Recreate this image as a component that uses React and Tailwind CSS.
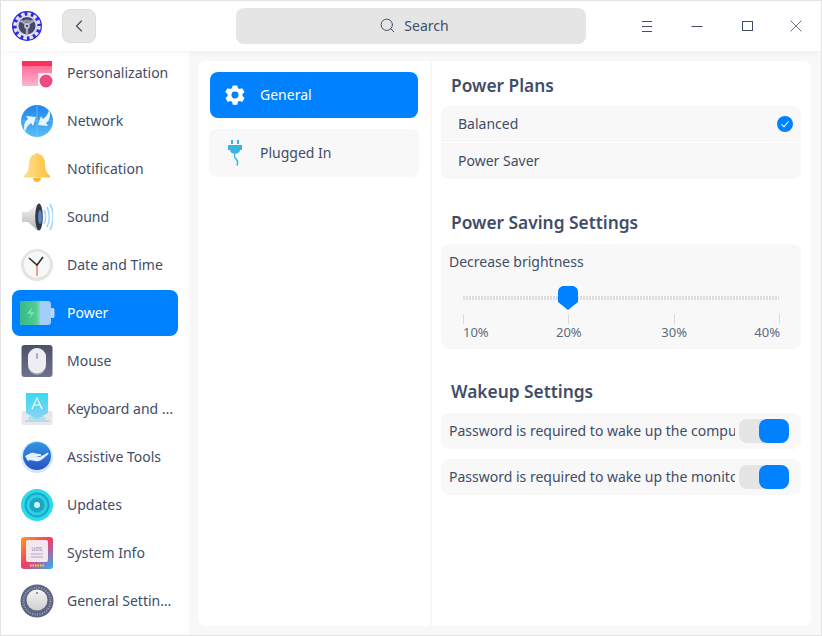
import React from 'react';
import { Search, ChevronLeft } from 'lucide-react';

const LogoIcon = () => (
  <svg width="32" height="32" viewBox="0 0 32 32">
    <circle cx="16" cy="16" r="15" fill="#2a2ae6" />
    <circle cx="16" cy="16" r="12" fill="none" stroke="#e4e4f0" strokeWidth="3.500" strokeDasharray="3.600 2.680" />
    <circle cx="16" cy="16" r="10.500" fill="#dcdce8" />
    <circle cx="16" cy="16" r="8.500" fill="#44496c" />
    <path d="M16 16 L9 10.500 A9 9 0 0 1 23 10.500 Z" fill="#3e4366" />
    <path d="M16 14.500L9.500 10.500M16 14.500l6.500-4M16 16v8" stroke="#a9abbd" strokeWidth="2.400" fill="none" />
    <ellipse cx="16" cy="11" rx="4" ry="1.600" fill="#8d90a8" />
    <circle cx="16" cy="16" r="2.800" fill="#d4d4e0" />
    <circle cx="16" cy="16" r="1.300" fill="#44496c" />
  </svg>
);

const PersonalizationIcon = () => (
  <svg width="32" height="32" viewBox="0 0 32 32">
    <defs>
      <linearGradient id="pers" x1="0" y1="0" x2="0" y2="1">
        <stop offset="0" stopColor="#ff5f8c" />
        <stop offset="1" stopColor="#ffb3d0" />
      </linearGradient>
    </defs>
    <path d="M1 4h30v24a1 1 0 0 1-1 1H2a1 1 0 0 1-1-1z" fill="url(#pers)" />
    <rect x="1" y="4" width="30" height="5" fill="#ff3058" />
    <rect x="17" y="16" width="14" height="13" fill="#f7dbe6" />
    <circle cx="25" cy="24" r="8" fill="#fff" />
    <circle cx="25" cy="24" r="6.500" fill="#ec4a80" />
  </svg>
);

const NetworkIcon = () => (
  <svg width="32" height="32" viewBox="0 0 32 32">
    <defs>
      <linearGradient id="net" x1="0" y1="0" x2="0" y2="1">
        <stop offset="0" stopColor="#1c86ec" />
        <stop offset="1" stopColor="#58bdfa" />
      </linearGradient>
    </defs>
    <circle cx="16" cy="16" r="16" fill="url(#net)" />
    <path d="M16 0v32M0 16h32" stroke="#7cc5f7" strokeWidth="0.700" fill="none" />
    <path d="M4 27c-2-5-1-10 3-13l-2-3 10 1-3 9-2-3c-3 2-5 5-6 9z" fill="#e8f5fe" />
    <path d="M28 5c2 5 1 10-3 13l2 3-10-1 3-9 2 3c3-2 5-5 6-9z" fill="#e8f5fe" />
  </svg>
);

const BellIcon = () => (
  <svg width="32" height="32" viewBox="0 0 32 32">
    <defs>
      <linearGradient id="bell" x1="0" y1="0" x2="1" y2="0">
        <stop offset="0" stopColor="#ffe08f" />
        <stop offset="1" stopColor="#ffbe3c" />
      </linearGradient>
    </defs>
    <circle cx="16" cy="2.500" r="2.200" fill="#f9c95c" />
    <path d="M16 1c6 0 8 5 8 10 0 6 2 9 5 12 .6.800 0 1.500-1 1.500H4c-1 0-1.600-.700-1-1.500 3-3 5-6 5-12C8 6 10 1 16 1z" fill="url(#bell)" />
    <path d="M12 25h8c0 2.500-1.800 4-4 4s-4-1.500-4-4z" fill="#fdb52b" />
  </svg>
);

const SoundIcon = () => (
  <svg width="32" height="32" viewBox="0 0 32 32">
    <defs>
      <linearGradient id="spk" x1="0" y1="0" x2="0" y2="1">
        <stop offset="0" stopColor="#f7f7f7" />
        <stop offset="1" stopColor="#b4b4b4" />
      </linearGradient>
    </defs>
    <path d="M1 11h6L17 2v28L7 21H1z" fill="url(#spk)" />
    <ellipse cx="18" cy="16" rx="3.800" ry="13.500" fill="#33384a" />
    <ellipse cx="19" cy="16" rx="2" ry="7" fill="#5a86c0" />
    <path d="M23 9c2 4 2 10 0 14M26 6c3 6 3 14 0 20M29 3c4 8 4 18 0 26" fill="none" stroke="#a8d6f8" strokeWidth="1.700" />
  </svg>
);

const ClockIcon = () => (
  <svg width="32" height="32" viewBox="0 0 32 32">
    <circle cx="16" cy="16" r="16" fill="#e4e4e4" />
    <circle cx="16" cy="15.500" r="13" fill="#f8f8f8" />
    <path d="M16 16v11" stroke="#f1775a" strokeWidth="1.400" />
    <path d="M8 9l8 7 6-8" fill="none" stroke="#2e2e33" strokeWidth="1.600" />
  </svg>
);

const BatteryIcon = () => (
  <svg width="36" height="26" viewBox="0 0 36 26">
    <defs>
      <linearGradient id="bat" x1="0" y1="0" x2="1" y2="0">
        <stop offset="0" stopColor="#35b985" />
        <stop offset="0.800" stopColor="#52cc94" />
        <stop offset="1" stopColor="#85deb0" />
      </linearGradient>
    </defs>
    <path d="M3 1h26c2 0 3 1 3 3v18c0 2-1 3-3 3H3c-1.500 0-2-1-2-3V4c0-2 .5-3 2-3z" fill="#a5cdfb" />
    <path d="M32 8h2c1 0 1.500 1 1.500 2v6c0 1-.5 2-1.500 2h-2z" fill="#b9d7fb" />
    <path d="M3 1h18v24H3c-1.500 0-2-1-2-3V4c0-2 .5-3 2-3z" fill="url(#bat)" />
    <path d="M13 7l-5 7h4l-2 5 6-7h-4z" fill="#7adcab" />
  </svg>
);

const MouseIcon = () => (
  <svg width="32" height="32" viewBox="0 0 32 32">
    <defs>
      <linearGradient id="mouseBg" x1="0" y1="0" x2="0" y2="1">
        <stop offset="0" stopColor="#4c5068" />
        <stop offset="1" stopColor="#6e7290" />
      </linearGradient>
    </defs>
    <rect x="0.500" y="0" width="31" height="32" rx="3" fill="url(#mouseBg)" />
    <rect x="7" y="3" width="18" height="27" rx="9" fill="#9ea1b4" />
    <rect x="7" y="3" width="18" height="25.500" rx="9" fill="#eeeef2" />
    <rect x="15" y="8" width="2" height="6" rx="1" fill="#a8aabb" />
  </svg>
);

const KeyboardIcon = () => (
  <svg width="32" height="32" viewBox="0 0 32 32">
    <defs>
      <linearGradient id="kb" x1="0" y1="0" x2="0" y2="1">
        <stop offset="0" stopColor="#31dcf0" />
        <stop offset="1" stopColor="#8fd0f4" />
      </linearGradient>
    </defs>
    <rect x="0.500" y="18" width="31" height="14" rx="2" fill="#e4e8ec" />
    <path d="M4 28h24" stroke="#c5ccd2" strokeWidth="1.500" />
    <ellipse cx="16" cy="25" rx="9" ry="3" fill="#a8e4ee" />
    <path d="M5 0h22v20l-11 6-11-6z" fill="url(#kb)" />
    <path d="M11 16l5-11 5 11M13 12h6" fill="none" stroke="#fff" strokeWidth="1.200" />
  </svg>
);

const AssistiveIcon = () => (
  <svg width="32" height="32" viewBox="0 0 32 32">
    <defs>
      <linearGradient id="asst" x1="0" y1="0" x2="0" y2="1">
        <stop offset="0" stopColor="#2f98e4" />
        <stop offset="1" stopColor="#2a50c4" />
      </linearGradient>
    </defs>
    <circle cx="16" cy="16" r="16" fill="#d3e8fc" />
    <circle cx="16" cy="15" r="14" fill="url(#asst)" />
    <path d="M4 15l6-3c2-.5 3 0 5 .5l4 .5c2 .3 2 2 0 2l-4 .5 4 .5 7-4c1.500-.5 2 .5 1 1.500l-6 5c-2 1.500-4 2-7 1.500l-5-1-2 1z" fill="#e6f1fb" />
  </svg>
);

const UpdatesIcon = () => (
  <svg width="32" height="32" viewBox="0 0 32 32">
    <circle cx="16" cy="16" r="16" fill="#28dcec" />
    <circle cx="16" cy="16" r="12.500" fill="#1aa7c6" />
    <circle cx="16" cy="16" r="9" fill="none" stroke="#2ccfe3" strokeWidth="3" />
    <circle cx="16" cy="16" r="3" fill="#d4f6fa" />
  </svg>
);

const SystemInfoIcon = () => (
  <svg width="32" height="32" viewBox="0 0 32 32">
    <defs>
      <linearGradient id="sysinfo" x1="0" y1="0" x2="1" y2="1">
        <stop offset="0" stopColor="#ff9a20" />
        <stop offset="0.500" stopColor="#f53a6a" />
        <stop offset="1" stopColor="#1fb6ff" />
      </linearGradient>
    </defs>
    <rect x="0" y="0" width="32" height="32" rx="3" fill="url(#sysinfo)" />
    <rect x="5" y="3" width="22" height="22" rx="2" fill="#f4e8ee" />
    <text x="16" y="14" fontSize="6" textAnchor="middle" fill="#9b8bb0" fontFamily="Liberation Mono, monospace">UOS</text>
    <path d="M10 17h12M10 20h12" stroke="#b3a6c0" strokeWidth="1.200" />
    <path d="M9 28.500h14" stroke="#ffd23c" strokeWidth="2" strokeDasharray="1.500 1" />
  </svg>
);

const GeneralSettingsIcon = () => (
  <svg width="34" height="34" viewBox="0 0 34 34">
    <defs>
      <linearGradient id="knob" x1="0" y1="0" x2="0" y2="1">
        <stop offset="0" stopColor="#f4f4f4" />
        <stop offset="1" stopColor="#cfcfd4" />
      </linearGradient>
    </defs>
    <circle cx="17" cy="17" r="16.500" fill="#5d6482" />
    <circle cx="17" cy="17" r="13.500" fill="none" stroke="#9ea3b8" strokeWidth="2" strokeDasharray="1 1.500" />
    <circle cx="17" cy="16" r="10.500" fill="url(#knob)" />
    <circle cx="17" cy="9" r="1" fill="#777" />
  </svg>
);

const GearIcon = () => (
  <svg width="22" height="22" viewBox="0 0 24 24" fill="#fff">
    <path fillRule="evenodd" d="M9.500 1.500h5l.7 3.100 1.700.9 3-1 2.500 4.300-2.300 2.100v2.200l2.300 2.100-2.500 4.300-3-1-1.700.9-.7 3.100h-5l-.7-3.100-1.700-.9-3 1-2.500-4.300 2.300-2.100v-2.200L1.300 8.800l2.500-4.300 3 1 1.700-.9zM12 8.200a3.800 3.800 0 1 0 0 7.600 3.800 3.800 0 0 0 0-7.600z" />
  </svg>
);

const PlugIcon = () => (
  <svg width="14" height="26" viewBox="0 0 14 26">
    <path d="M3 0h2v4H3zM9 0h2v4H9z" fill="#39b4e0" />
    <path d="M0 5h14v5h-2c0 2-1.500 3-3 3.500H5C3.500 13 2 12 2 10H0z" fill="#39b4e0" />
    <path d="M7 13c-1 3-1 4 1 6s2 4 1 6.500" fill="none" stroke="#39b4e0" strokeWidth="1.500" />
  </svg>
);

const navItems = [
  { label: 'Personalization', icon: <PersonalizationIcon /> },
  { label: 'Network', icon: <NetworkIcon /> },
  { label: 'Notification', icon: <BellIcon /> },
  { label: 'Sound', icon: <SoundIcon /> },
  { label: 'Date and Time', icon: <ClockIcon /> },
  { label: 'Power', icon: <BatteryIcon />, active: true },
  { label: 'Mouse', icon: <MouseIcon /> },
  { label: 'Keyboard and Language', icon: <KeyboardIcon /> },
  { label: 'Assistive Tools', icon: <AssistiveIcon /> },
  { label: 'Updates', icon: <UpdatesIcon /> },
  { label: 'System Info', icon: <SystemInfoIcon /> },
  { label: 'General Settings', icon: <GeneralSettingsIcon /> },
];

const Toggle = () => (
  <div className="w-[50px] h-6 shrink-0 rounded-lg bg-[#e5e5e5] flex justify-end">
    <div className="w-[30px] h-6 rounded-lg bg-[#0081ff]" />
  </div>
);

const SwitchRow = ({ label }) => (
  <div className="h-9 rounded-lg bg-[#f8f8f8] flex items-center pl-2 pr-3 gap-1">
    <span className="flex-1 min-w-0 overflow-hidden whitespace-nowrap">{label}</span>
    <Toggle />
  </div>
);

const ticks = [
  { label: '10%', align: 'items-start' },
  { label: '20%', align: 'items-center' },
  { label: '30%', align: 'items-center' },
  { label: '40%', align: 'items-end' },
];

const App = () => {
  return (
    <div
      className="w-[822px] h-[636px] flex flex-col overflow-hidden border border-[#e2e2e2] bg-[#f8f8f8] text-sm text-[#414d68]"
      style={{ fontFamily: '"Noto Sans", sans-serif' }}
    >
      {/* Title bar */}
      <div className="relative z-10 h-[50px] shrink-0 bg-white flex items-center shadow-[0_2px_6px_rgba(0,0,0,0.04)]">
        <div className="w-[200px] shrink-0 flex items-center">
          <div className="w-[60px] pl-[10px] flex items-center">
            <LogoIcon />
          </div>
          <button className="w-[34px] h-[34px] ml-px rounded-lg bg-[#e6e6e6] border border-[#dcdcdc] flex items-center justify-center">
            <ChevronLeft size={20} strokeWidth={1.4} />
          </button>
        </div>
        <div className="flex-1 flex justify-center">
          <div className="w-[350px] h-9 -mt-px pl-[6px] rounded-lg bg-[#e5e5e5] flex items-center justify-center gap-2">
            <Search size={17} strokeWidth={1.4} />
            <span>Search</span>
          </div>
        </div>
        <div className="flex w-[200px] shrink-0">
          <div className="w-[50px] h-[50px] pl-[2px] flex items-center justify-center">
            <svg width="12" height="12" viewBox="0 0 12 12" stroke="#414d68" strokeWidth="1">
              <path d="M1 1.500h10M1 6.500h10M1 11.500h10" />
            </svg>
          </div>
          <div className="w-[50px] h-[50px] pl-[2px] flex items-center justify-center">
            <svg width="12" height="12" viewBox="0 0 12 12" stroke="#414d68" strokeWidth="1">
              <path d="M0.500 6.500h11" />
            </svg>
          </div>
          <div className="w-[50px] h-[50px] pl-[2px] flex items-center justify-center">
            <svg width="12" height="12" viewBox="0 0 12 12" fill="none" stroke="#414d68" strokeWidth="1">
              <rect x="1.500" y="1.500" width="10" height="9" />
            </svg>
          </div>
          <div className="w-[50px] h-[50px] flex items-center justify-center">
            <svg width="12" height="12" viewBox="0 0 12 12" stroke="#414d68" strokeWidth="0.8">
              <path d="M0.500 0.500l11 11M11.500 0.500l-11 11" />
            </svg>
          </div>
        </div>
      </div>

      <div className="flex-1 min-h-0 flex">
        {/* Sidebar */}
        <div className="w-[188px] shrink-0 bg-white overflow-hidden">
          <div className="-mt-px pl-[11px] pr-[11px] flex flex-col gap-[2px]">
            {navItems.map((item) => (
              <div
                key={item.label}
                className={`h-[46px] shrink-0 rounded-lg flex items-center ${item.active ? 'bg-[#0081ff] text-white' : ''}`}
              >
                <div className="w-[50px] h-[46px] shrink-0 flex items-center justify-center">{item.icon}</div>
                <span className="ml-[5px] min-w-0 truncate pr-[4px]">{item.label}</span>
              </div>
            ))}
          </div>
        </div>

        {/* Content panel */}
        <div className="flex-1 min-w-0 pl-[9px] pr-[10px] pt-[10px] pb-[9px]">
          <div className="h-full rounded-lg bg-white flex overflow-hidden">
            <div className="w-[232px] shrink-0 px-[11px] pt-[11px] flex flex-col gap-[11px]">
              <div className="h-[46px] mx-px rounded-lg bg-[#0081ff] text-white flex items-center">
                <div className="w-[50px] flex justify-center"><GearIcon /></div>
                <span>General</span>
              </div>
              <div className="h-12 rounded-lg bg-[#f8f8f8] flex items-center">
                <div className="w-[51px] flex justify-center"><PlugIcon /></div>
                <span>Plugged In</span>
              </div>
            </div>

            <div className="w-[2px] shrink-0 bg-[#f8f8f8]" />

            <div className="flex-1 min-w-0 pl-[9px] pr-[10px] pt-[12px]">
              <h2 className="pl-[10px] h-6 text-[17.33px] leading-6 font-semibold">Power Plans</h2>
              <div className="mt-[9px] rounded-lg overflow-hidden flex flex-col gap-px">
                <div className="h-9 bg-[#f8f8f8] flex items-center justify-between pl-[17px] pr-2">
                  <span>Balanced</span>
                  <svg width="16" height="16" viewBox="0 0 16 16">
                    <circle cx="8" cy="8" r="8" fill="#0081ff" />
                    <path d="M4.500 8.300l2.500 2.500 4.500-5.300" fill="none" stroke="#fff" strokeWidth="1.100" />
                  </svg>
                </div>
                <div className="h-9 bg-[#f8f8f8] flex items-center pl-[17px]">
                  <span>Power Saver</span>
                </div>
              </div>

              <h2 className="mt-[31px] pl-[10px] h-6 text-[17.33px] leading-6 font-semibold">Power Saving Settings</h2>
              <div className="mt-[10px] h-[105px] rounded-lg bg-[#f8f8f8] px-2 pt-2">
                <div className="leading-5">Decrease brightness</div>
                <div className="mt-[14px] pl-[14px] pr-[13px]">
                  <div className="relative h-6 flex items-center">
                    <div className="w-full h-1 mr-px bg-[repeating-linear-gradient(90deg,#dedede_0_2px,transparent_2px_3px)]" />
                    <svg className="absolute left-[95px] top-0" width="20" height="24" viewBox="0 0 20 24">
                      <path d="M6 0h8c3.500 0 6 2.500 6 6v10l-10 8L0 16V6c0-3.500 2.500-6 6-6z" fill="#0081ff" />
                    </svg>
                  </div>
                  <div className="mt-1 flex justify-between text-[13px] leading-4 text-[#5e6b80]">
                    {ticks.map((tick) => (
                      <div key={tick.label} className={`w-px flex flex-col ${tick.align}`}>
                        <div className="w-px h-[10px] bg-[#dcdcdc]" />
                        <span className="whitespace-nowrap">{tick.label}</span>
                      </div>
                    ))}
                  </div>
                </div>
              </div>

              <h2 className="mt-[30px] pl-[10px] h-6 text-[17.33px] leading-6 font-semibold">Wakeup Settings</h2>
              <div className="mt-[10px] flex flex-col gap-[10px]">
                <SwitchRow label="Password is required to wake up the computer" />
                <SwitchRow label="Password is required to wake up the monitor" />
              </div>
            </div>
          </div>
        </div>
      </div>
    </div>
  );
};

export default App;
